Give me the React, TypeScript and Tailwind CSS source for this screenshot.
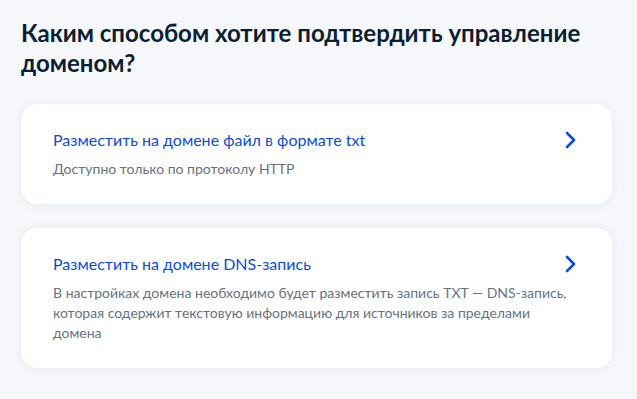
import { ReactNode } from "react";

const Chevron = () => (
  <svg width="12" height="18" viewBox="0 0 12 18" fill="none" className="shrink-0">
    <path d="M3 2l7 7-7 7" stroke="#0d4cd3" strokeWidth="2.6" strokeLinecap="round" strokeLinejoin="round" />
  </svg>
);

const OptionCard = ({ title, children }: { title: string; children: ReactNode }) => {
  return (
    <div className="w-full bg-white rounded-2xl shadow-[0_1px_8px_rgba(102,114,140,0.10)] pl-8 pr-9 pt-6 pb-[25px] flex flex-col gap-[7px] cursor-pointer">
      <div className="flex items-center justify-between gap-4">
        <span className="text-[#0d4cd3] text-base leading-6">{title}</span>
        <Chevron />
      </div>
      <span className="text-[#66727f] text-sm leading-5">{children}</span>
    </div>
  );
};

export default function App() {
  return (
    <div className="min-h-[399px] w-full bg-[#f5f7fa] pl-[21px] pr-[25px] pt-[18px] font-['Lato','Noto_Sans',sans-serif]">
      <h1 className="text-[#0b1f33] text-2xl font-bold leading-[30px] mb-[26px]">
        Каким способом хотите подтвердить управление доменом?
      </h1>
      <div className="flex flex-col gap-6">
        <OptionCard title="Разместить на домене файл в формате txt">
          Доступно только по протоколу HTTP
        </OptionCard>
        <OptionCard title="Разместить на домене DNS-запись">
          В настройках домена необходимо будет разместить запись TXT — DNS-запись, которая содержит текстовую
          информацию для источников за пределами домена
        </OptionCard>
      </div>
    </div>
  );
}
